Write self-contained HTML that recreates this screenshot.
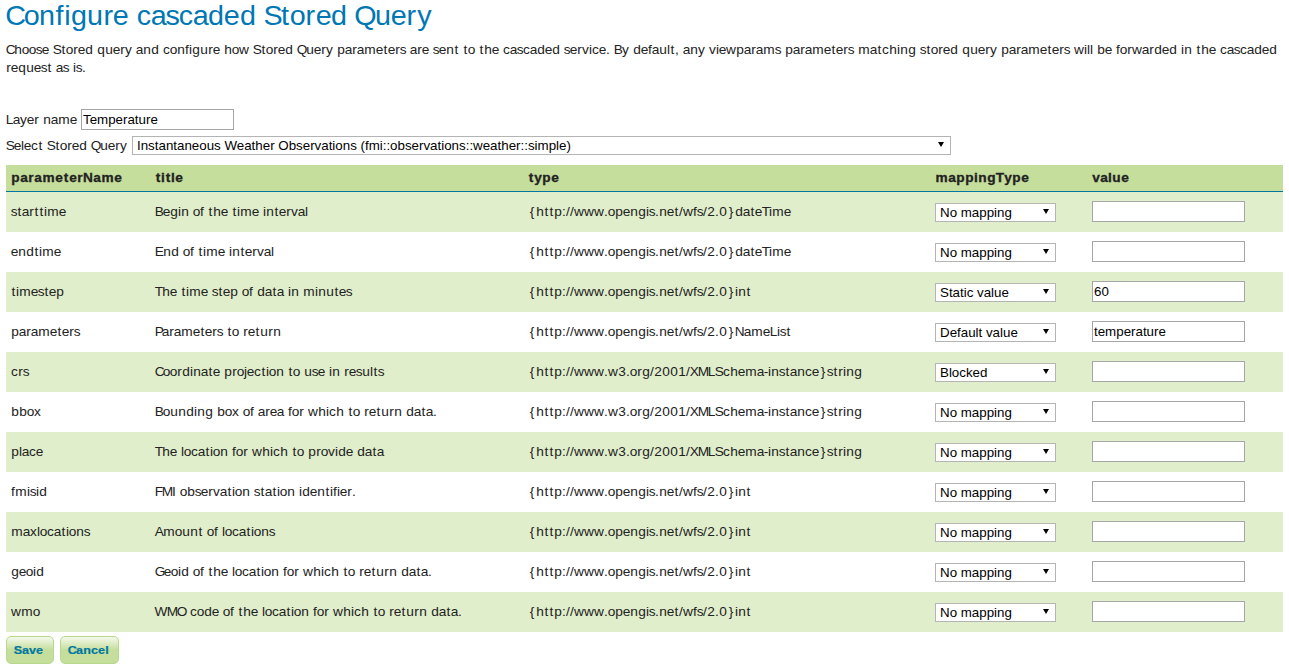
<!DOCTYPE html>
<html><head><meta charset="utf-8">
<style>
html,body{margin:0;padding:0;background:#fff;width:1289px;height:672px;overflow:hidden;position:relative}
body{font-family:"Liberation Sans",sans-serif;font-size:12.72px;color:#222}
.t{position:absolute;white-space:nowrap;line-height:18px}
.t i{display:inline-block;font-style:normal;text-align:center;transform:scaleX(1.075)}
.w3{width:3px}.w4{width:4px}.w5{width:5px}.w6{width:6px}.w7{width:7px}.w8{width:8px}.w8_01562{width:8.01562px}.w8_875{width:8.875px}.w9{width:9px}.w9_875{width:9.875px}.w10{width:10px}.w10_3594{width:10.3594px}.w12{width:12px}.w13{width:13px}.w13_125{width:13.125px}.w13_8594{width:13.8594px}.w14_9219{width:14.9219px}.w15_4219{width:15.4219px}.w15_4375{width:15.4375px}.w15_5{width:15.5px}.w15_9688{width:15.9688px}.w16{width:16px}.w17_5938{width:17.5938px}.w19_8438{width:19.8438px}
.h1{left:6px;top:0;font-size:26.71px;line-height:32px;color:#0077b5}
.desc{left:6px}
.l1{top:41px}.l2{top:59px}
.lbl{left:6px}
.th{top:169px;font-weight:bold;-webkit-text-stroke:0.3px #222}
.thead{position:absolute;left:6px;top:165px;width:1277px;height:26px;background:#c5de9b}
.tline{position:absolute;left:6px;top:191px;width:1277px;height:1px;background:#0076a1}
.row{position:absolute;left:6px;width:1277px;height:40px;background:#e0eecb}
.inp{position:absolute;width:151px;height:19px;border:1px solid #a6a6a6;background:#fff;font-size:13.33px;color:#000;line-height:19px;box-sizing:content-box}
.inp span{position:absolute;left:1px;top:0}
.sel{position:absolute;border:1px solid #b4b4b4;background:#fff;font-size:13.33px;color:#000;line-height:17px;box-sizing:border-box;height:19px}
.sel span{position:absolute;left:4px;top:0;white-space:nowrap}
.sel i{position:absolute;right:6px;top:5px;width:0;height:0;border-left:3px solid transparent;border-right:3px solid transparent;border-top:5px solid #000}
.btn{position:absolute;top:636px;height:28px;box-sizing:border-box;border:1px solid #b8d88e;border-radius:5px;background:linear-gradient(#f4f9ec 0%,#c5de9b 50%,#c5de9b 100%)}
.bt{left:7px;top:4px;color:#0076a1;font-weight:bold;font-size:11.66px;-webkit-text-stroke:0.2px #0076a1}
</style></head><body>

<div class="t h1"><i class="w17_5938">C</i><i class="w15_4219">o</i><i class="w15_9688">n</i><i class="w8_875">f</i><i class="w7">i</i><i class="w16">g</i><i class="w15_9688">u</i><i class="w10_3594">r</i><i class="w15_5">e</i><i class="w8_01562">&nbsp;</i><i class="w13_8594">c</i><i class="w15_4375">a</i><i class="w13_125">s</i><i class="w13_8594">c</i><i class="w15_4375">a</i><i class="w16">d</i><i class="w15_5">e</i><i class="w16">d</i><i class="w8_01562">&nbsp;</i><i class="w16">S</i><i class="w9_875">t</i><i class="w15_4219">o</i><i class="w10_3594">r</i><i class="w15_5">e</i><i class="w16">d</i><i class="w8_01562">&nbsp;</i><i class="w19_8438">Q</i><i class="w15_9688">u</i><i class="w15_5">e</i><i class="w10_3594">r</i><i class="w14_9219">y</i></div>
<div class="t desc l1"><i class="w8">C</i><i class="w8">h</i><i class="w7">o</i><i class="w7">o</i><i class="w6">s</i><i class="w7">e</i><i class="w4">&nbsp;</i><i class="w8">S</i><i class="w5">t</i><i class="w7">o</i><i class="w5">r</i><i class="w7">e</i><i class="w8">d</i><i class="w4">&nbsp;</i><i class="w8">q</i><i class="w8">u</i><i class="w7">e</i><i class="w5">r</i><i class="w7">y</i><i class="w4">&nbsp;</i><i class="w7">a</i><i class="w8">n</i><i class="w8">d</i><i class="w4">&nbsp;</i><i class="w7">c</i><i class="w7">o</i><i class="w8">n</i><i class="w4">f</i><i class="w3">i</i><i class="w8">g</i><i class="w8">u</i><i class="w5">r</i><i class="w7">e</i><i class="w4">&nbsp;</i><i class="w8">h</i><i class="w7">o</i><i class="w10">w</i><i class="w4">&nbsp;</i><i class="w8">S</i><i class="w5">t</i><i class="w7">o</i><i class="w5">r</i><i class="w7">e</i><i class="w8">d</i><i class="w4">&nbsp;</i><i class="w9">Q</i><i class="w8">u</i><i class="w7">e</i><i class="w5">r</i><i class="w7">y</i><i class="w4">&nbsp;</i><i class="w8">p</i><i class="w7">a</i><i class="w5">r</i><i class="w7">a</i><i class="w12">m</i><i class="w7">e</i><i class="w5">t</i><i class="w7">e</i><i class="w5">r</i><i class="w6">s</i><i class="w4">&nbsp;</i><i class="w7">a</i><i class="w5">r</i><i class="w7">e</i><i class="w4">&nbsp;</i><i class="w6">s</i><i class="w7">e</i><i class="w8">n</i><i class="w5">t</i><i class="w4">&nbsp;</i><i class="w5">t</i><i class="w7">o</i><i class="w4">&nbsp;</i><i class="w5">t</i><i class="w8">h</i><i class="w7">e</i><i class="w4">&nbsp;</i><i class="w7">c</i><i class="w7">a</i><i class="w6">s</i><i class="w7">c</i><i class="w7">a</i><i class="w8">d</i><i class="w7">e</i><i class="w8">d</i><i class="w4">&nbsp;</i><i class="w6">s</i><i class="w7">e</i><i class="w5">r</i><i class="w7">v</i><i class="w3">i</i><i class="w7">c</i><i class="w7">e</i><i class="w4">.</i><i class="w4">&nbsp;</i><i class="w8">B</i><i class="w7">y</i><i class="w4">&nbsp;</i><i class="w8">d</i><i class="w7">e</i><i class="w4">f</i><i class="w7">a</i><i class="w8">u</i><i class="w3">l</i><i class="w5">t</i><i class="w4">,</i><i class="w4">&nbsp;</i><i class="w7">a</i><i class="w8">n</i><i class="w7">y</i><i class="w4">&nbsp;</i><i class="w7">v</i><i class="w3">i</i><i class="w7">e</i><i class="w10">w</i><i class="w8">p</i><i class="w7">a</i><i class="w5">r</i><i class="w7">a</i><i class="w12">m</i><i class="w6">s</i><i class="w4">&nbsp;</i><i class="w8">p</i><i class="w7">a</i><i class="w5">r</i><i class="w7">a</i><i class="w12">m</i><i class="w7">e</i><i class="w5">t</i><i class="w7">e</i><i class="w5">r</i><i class="w6">s</i><i class="w4">&nbsp;</i><i class="w12">m</i><i class="w7">a</i><i class="w5">t</i><i class="w7">c</i><i class="w8">h</i><i class="w3">i</i><i class="w8">n</i><i class="w8">g</i><i class="w4">&nbsp;</i><i class="w6">s</i><i class="w5">t</i><i class="w7">o</i><i class="w5">r</i><i class="w7">e</i><i class="w8">d</i><i class="w4">&nbsp;</i><i class="w8">q</i><i class="w8">u</i><i class="w7">e</i><i class="w5">r</i><i class="w7">y</i><i class="w4">&nbsp;</i><i class="w8">p</i><i class="w7">a</i><i class="w5">r</i><i class="w7">a</i><i class="w12">m</i><i class="w7">e</i><i class="w5">t</i><i class="w7">e</i><i class="w5">r</i><i class="w6">s</i><i class="w4">&nbsp;</i><i class="w10">w</i><i class="w3">i</i><i class="w3">l</i><i class="w3">l</i><i class="w4">&nbsp;</i><i class="w8">b</i><i class="w7">e</i><i class="w4">&nbsp;</i><i class="w4">f</i><i class="w7">o</i><i class="w5">r</i><i class="w10">w</i><i class="w7">a</i><i class="w5">r</i><i class="w8">d</i><i class="w7">e</i><i class="w8">d</i><i class="w4">&nbsp;</i><i class="w3">i</i><i class="w8">n</i><i class="w4">&nbsp;</i><i class="w5">t</i><i class="w8">h</i><i class="w7">e</i><i class="w4">&nbsp;</i><i class="w7">c</i><i class="w7">a</i><i class="w6">s</i><i class="w7">c</i><i class="w7">a</i><i class="w8">d</i><i class="w7">e</i><i class="w8">d</i></div><div class="t desc l2"><i class="w5">r</i><i class="w7">e</i><i class="w8">q</i><i class="w8">u</i><i class="w7">e</i><i class="w6">s</i><i class="w5">t</i><i class="w4">&nbsp;</i><i class="w7">a</i><i class="w6">s</i><i class="w4">&nbsp;</i><i class="w3">i</i><i class="w6">s</i><i class="w4">.</i></div>
<div class="t lbl" style="top:111px"><i class="w7">L</i><i class="w7">a</i><i class="w7">y</i><i class="w7">e</i><i class="w5">r</i><i class="w4">&nbsp;</i><i class="w8">n</i><i class="w7">a</i><i class="w12">m</i><i class="w7">e</i></div>
<div class="inp" style="left:81px;top:109px"><span>Temperature</span></div>
<div class="t lbl" style="top:137px"><i class="w8">S</i><i class="w7">e</i><i class="w3">l</i><i class="w7">e</i><i class="w7">c</i><i class="w5">t</i><i class="w4">&nbsp;</i><i class="w8">S</i><i class="w5">t</i><i class="w7">o</i><i class="w5">r</i><i class="w7">e</i><i class="w8">d</i><i class="w4">&nbsp;</i><i class="w9">Q</i><i class="w8">u</i><i class="w7">e</i><i class="w5">r</i><i class="w7">y</i></div>
<div class="sel big" style="left:132px;top:136px;width:819px"><span>Instantaneous Weather Observations (fmi::observations::weather::simple)</span><i></i></div>
<div class="thead"></div><div class="tline"></div>
<div class="t th" style="left:11px"><i class="w9">p</i><i class="w8">a</i><i class="w6">r</i><i class="w8">a</i><i class="w13">m</i><i class="w8">e</i><i class="w6">t</i><i class="w8">e</i><i class="w6">r</i><i class="w10">N</i><i class="w8">a</i><i class="w13">m</i><i class="w8">e</i></div>
<div class="t th" style="left:155px"><i class="w6">t</i><i class="w4">i</i><i class="w6">t</i><i class="w4">l</i><i class="w8">e</i></div>
<div class="t th" style="left:528px"><i class="w6">t</i><i class="w8">y</i><i class="w9">p</i><i class="w8">e</i></div>
<div class="t th" style="left:935px"><i class="w13">m</i><i class="w8">a</i><i class="w9">p</i><i class="w9">p</i><i class="w4">i</i><i class="w9">n</i><i class="w9">g</i><i class="w8">T</i><i class="w8">y</i><i class="w9">p</i><i class="w8">e</i></div>
<div class="t th" style="left:1092px"><i class="w8">v</i><i class="w8">a</i><i class="w4">l</i><i class="w9">u</i><i class="w8">e</i></div>
<div class="row" style="top:192px"></div>
<div class="t td" style="left:11px;top:203px"><i class="w6">s</i><i class="w5">t</i><i class="w7">a</i><i class="w5">r</i><i class="w5">t</i><i class="w5">t</i><i class="w3">i</i><i class="w12">m</i><i class="w7">e</i></div>
<div class="t td" style="left:155px;top:203px"><i class="w8">B</i><i class="w7">e</i><i class="w8">g</i><i class="w3">i</i><i class="w8">n</i><i class="w4">&nbsp;</i><i class="w7">o</i><i class="w4">f</i><i class="w4">&nbsp;</i><i class="w5">t</i><i class="w8">h</i><i class="w7">e</i><i class="w4">&nbsp;</i><i class="w5">t</i><i class="w3">i</i><i class="w12">m</i><i class="w7">e</i><i class="w4">&nbsp;</i><i class="w3">i</i><i class="w8">n</i><i class="w5">t</i><i class="w7">e</i><i class="w5">r</i><i class="w7">v</i><i class="w7">a</i><i class="w3">l</i></div>
<div class="t td" style="left:528px;top:203px"><i class="w8">{</i><i class="w8">h</i><i class="w5">t</i><i class="w5">t</i><i class="w8">p</i><i class="w4">:</i><i class="w4">/</i><i class="w4">/</i><i class="w10">w</i><i class="w10">w</i><i class="w10">w</i><i class="w4">.</i><i class="w7">o</i><i class="w8">p</i><i class="w7">e</i><i class="w8">n</i><i class="w8">g</i><i class="w3">i</i><i class="w6">s</i><i class="w4">.</i><i class="w8">n</i><i class="w7">e</i><i class="w5">t</i><i class="w4">/</i><i class="w10">w</i><i class="w4">f</i><i class="w6">s</i><i class="w4">/</i><i class="w8">2</i><i class="w4">.</i><i class="w8">0</i><i class="w8">}</i><i class="w8">d</i><i class="w7">a</i><i class="w5">t</i><i class="w7">e</i><i class="w7">T</i><i class="w3">i</i><i class="w12">m</i><i class="w7">e</i></div>
<div class="sel" style="left:935px;top:203px;width:121px"><span>No mapping</span><i></i></div>
<div class="inp" style="left:1092px;top:201px"><span></span></div>
<div class="t td" style="left:11px;top:243px"><i class="w7">e</i><i class="w8">n</i><i class="w8">d</i><i class="w5">t</i><i class="w3">i</i><i class="w12">m</i><i class="w7">e</i></div>
<div class="t td" style="left:155px;top:243px"><i class="w8">E</i><i class="w8">n</i><i class="w8">d</i><i class="w4">&nbsp;</i><i class="w7">o</i><i class="w4">f</i><i class="w4">&nbsp;</i><i class="w5">t</i><i class="w3">i</i><i class="w12">m</i><i class="w7">e</i><i class="w4">&nbsp;</i><i class="w3">i</i><i class="w8">n</i><i class="w5">t</i><i class="w7">e</i><i class="w5">r</i><i class="w7">v</i><i class="w7">a</i><i class="w3">l</i></div>
<div class="t td" style="left:528px;top:243px"><i class="w8">{</i><i class="w8">h</i><i class="w5">t</i><i class="w5">t</i><i class="w8">p</i><i class="w4">:</i><i class="w4">/</i><i class="w4">/</i><i class="w10">w</i><i class="w10">w</i><i class="w10">w</i><i class="w4">.</i><i class="w7">o</i><i class="w8">p</i><i class="w7">e</i><i class="w8">n</i><i class="w8">g</i><i class="w3">i</i><i class="w6">s</i><i class="w4">.</i><i class="w8">n</i><i class="w7">e</i><i class="w5">t</i><i class="w4">/</i><i class="w10">w</i><i class="w4">f</i><i class="w6">s</i><i class="w4">/</i><i class="w8">2</i><i class="w4">.</i><i class="w8">0</i><i class="w8">}</i><i class="w8">d</i><i class="w7">a</i><i class="w5">t</i><i class="w7">e</i><i class="w7">T</i><i class="w3">i</i><i class="w12">m</i><i class="w7">e</i></div>
<div class="sel" style="left:935px;top:243px;width:121px"><span>No mapping</span><i></i></div>
<div class="inp" style="left:1092px;top:241px"><span></span></div>
<div class="row" style="top:272px"></div>
<div class="t td" style="left:11px;top:283px"><i class="w5">t</i><i class="w3">i</i><i class="w12">m</i><i class="w7">e</i><i class="w6">s</i><i class="w5">t</i><i class="w7">e</i><i class="w8">p</i></div>
<div class="t td" style="left:155px;top:283px"><i class="w7">T</i><i class="w8">h</i><i class="w7">e</i><i class="w4">&nbsp;</i><i class="w5">t</i><i class="w3">i</i><i class="w12">m</i><i class="w7">e</i><i class="w4">&nbsp;</i><i class="w6">s</i><i class="w5">t</i><i class="w7">e</i><i class="w8">p</i><i class="w4">&nbsp;</i><i class="w7">o</i><i class="w4">f</i><i class="w4">&nbsp;</i><i class="w8">d</i><i class="w7">a</i><i class="w5">t</i><i class="w7">a</i><i class="w4">&nbsp;</i><i class="w3">i</i><i class="w8">n</i><i class="w4">&nbsp;</i><i class="w12">m</i><i class="w3">i</i><i class="w8">n</i><i class="w8">u</i><i class="w5">t</i><i class="w7">e</i><i class="w6">s</i></div>
<div class="t td" style="left:528px;top:283px"><i class="w8">{</i><i class="w8">h</i><i class="w5">t</i><i class="w5">t</i><i class="w8">p</i><i class="w4">:</i><i class="w4">/</i><i class="w4">/</i><i class="w10">w</i><i class="w10">w</i><i class="w10">w</i><i class="w4">.</i><i class="w7">o</i><i class="w8">p</i><i class="w7">e</i><i class="w8">n</i><i class="w8">g</i><i class="w3">i</i><i class="w6">s</i><i class="w4">.</i><i class="w8">n</i><i class="w7">e</i><i class="w5">t</i><i class="w4">/</i><i class="w10">w</i><i class="w4">f</i><i class="w6">s</i><i class="w4">/</i><i class="w8">2</i><i class="w4">.</i><i class="w8">0</i><i class="w8">}</i><i class="w3">i</i><i class="w8">n</i><i class="w5">t</i></div>
<div class="sel" style="left:935px;top:283px;width:121px"><span>Static value</span><i></i></div>
<div class="inp" style="left:1092px;top:281px"><span>60</span></div>
<div class="t td" style="left:11px;top:323px"><i class="w8">p</i><i class="w7">a</i><i class="w5">r</i><i class="w7">a</i><i class="w12">m</i><i class="w7">e</i><i class="w5">t</i><i class="w7">e</i><i class="w5">r</i><i class="w6">s</i></div>
<div class="t td" style="left:155px;top:323px"><i class="w7">P</i><i class="w7">a</i><i class="w5">r</i><i class="w7">a</i><i class="w12">m</i><i class="w7">e</i><i class="w5">t</i><i class="w7">e</i><i class="w5">r</i><i class="w6">s</i><i class="w4">&nbsp;</i><i class="w5">t</i><i class="w7">o</i><i class="w4">&nbsp;</i><i class="w5">r</i><i class="w7">e</i><i class="w5">t</i><i class="w8">u</i><i class="w5">r</i><i class="w8">n</i></div>
<div class="t td" style="left:528px;top:323px"><i class="w8">{</i><i class="w8">h</i><i class="w5">t</i><i class="w5">t</i><i class="w8">p</i><i class="w4">:</i><i class="w4">/</i><i class="w4">/</i><i class="w10">w</i><i class="w10">w</i><i class="w10">w</i><i class="w4">.</i><i class="w7">o</i><i class="w8">p</i><i class="w7">e</i><i class="w8">n</i><i class="w8">g</i><i class="w3">i</i><i class="w6">s</i><i class="w4">.</i><i class="w8">n</i><i class="w7">e</i><i class="w5">t</i><i class="w4">/</i><i class="w10">w</i><i class="w4">f</i><i class="w6">s</i><i class="w4">/</i><i class="w8">2</i><i class="w4">.</i><i class="w8">0</i><i class="w8">}</i><i class="w9">N</i><i class="w7">a</i><i class="w12">m</i><i class="w7">e</i><i class="w7">L</i><i class="w3">i</i><i class="w6">s</i><i class="w5">t</i></div>
<div class="sel" style="left:935px;top:323px;width:121px"><span>Default value</span><i></i></div>
<div class="inp" style="left:1092px;top:321px"><span>temperature</span></div>
<div class="row" style="top:352px"></div>
<div class="t td" style="left:11px;top:363px"><i class="w7">c</i><i class="w5">r</i><i class="w6">s</i></div>
<div class="t td" style="left:155px;top:363px"><i class="w8">C</i><i class="w7">o</i><i class="w7">o</i><i class="w5">r</i><i class="w8">d</i><i class="w3">i</i><i class="w8">n</i><i class="w7">a</i><i class="w5">t</i><i class="w7">e</i><i class="w4">&nbsp;</i><i class="w8">p</i><i class="w5">r</i><i class="w7">o</i><i class="w3">j</i><i class="w7">e</i><i class="w7">c</i><i class="w5">t</i><i class="w3">i</i><i class="w7">o</i><i class="w8">n</i><i class="w4">&nbsp;</i><i class="w5">t</i><i class="w7">o</i><i class="w4">&nbsp;</i><i class="w8">u</i><i class="w6">s</i><i class="w7">e</i><i class="w4">&nbsp;</i><i class="w3">i</i><i class="w8">n</i><i class="w4">&nbsp;</i><i class="w5">r</i><i class="w7">e</i><i class="w6">s</i><i class="w8">u</i><i class="w3">l</i><i class="w5">t</i><i class="w6">s</i></div>
<div class="t td" style="left:528px;top:363px"><i class="w8">{</i><i class="w8">h</i><i class="w5">t</i><i class="w5">t</i><i class="w8">p</i><i class="w4">:</i><i class="w4">/</i><i class="w4">/</i><i class="w10">w</i><i class="w10">w</i><i class="w10">w</i><i class="w4">.</i><i class="w10">w</i><i class="w8">3</i><i class="w4">.</i><i class="w7">o</i><i class="w5">r</i><i class="w8">g</i><i class="w4">/</i><i class="w8">2</i><i class="w8">0</i><i class="w8">0</i><i class="w8">1</i><i class="w4">/</i><i class="w8">X</i><i class="w10">M</i><i class="w7">L</i><i class="w8">S</i><i class="w7">c</i><i class="w8">h</i><i class="w7">e</i><i class="w12">m</i><i class="w7">a</i><i class="w4">-</i><i class="w3">i</i><i class="w8">n</i><i class="w6">s</i><i class="w5">t</i><i class="w7">a</i><i class="w8">n</i><i class="w7">c</i><i class="w7">e</i><i class="w8">}</i><i class="w6">s</i><i class="w5">t</i><i class="w5">r</i><i class="w3">i</i><i class="w8">n</i><i class="w8">g</i></div>
<div class="sel" style="left:935px;top:363px;width:121px"><span>Blocked</span><i></i></div>
<div class="inp" style="left:1092px;top:361px"><span></span></div>
<div class="t td" style="left:11px;top:403px"><i class="w8">b</i><i class="w8">b</i><i class="w7">o</i><i class="w7">x</i></div>
<div class="t td" style="left:155px;top:403px"><i class="w8">B</i><i class="w7">o</i><i class="w8">u</i><i class="w8">n</i><i class="w8">d</i><i class="w3">i</i><i class="w8">n</i><i class="w8">g</i><i class="w4">&nbsp;</i><i class="w8">b</i><i class="w7">o</i><i class="w7">x</i><i class="w4">&nbsp;</i><i class="w7">o</i><i class="w4">f</i><i class="w4">&nbsp;</i><i class="w7">a</i><i class="w5">r</i><i class="w7">e</i><i class="w7">a</i><i class="w4">&nbsp;</i><i class="w4">f</i><i class="w7">o</i><i class="w5">r</i><i class="w4">&nbsp;</i><i class="w10">w</i><i class="w8">h</i><i class="w3">i</i><i class="w7">c</i><i class="w8">h</i><i class="w4">&nbsp;</i><i class="w5">t</i><i class="w7">o</i><i class="w4">&nbsp;</i><i class="w5">r</i><i class="w7">e</i><i class="w5">t</i><i class="w8">u</i><i class="w5">r</i><i class="w8">n</i><i class="w4">&nbsp;</i><i class="w8">d</i><i class="w7">a</i><i class="w5">t</i><i class="w7">a</i><i class="w4">.</i></div>
<div class="t td" style="left:528px;top:403px"><i class="w8">{</i><i class="w8">h</i><i class="w5">t</i><i class="w5">t</i><i class="w8">p</i><i class="w4">:</i><i class="w4">/</i><i class="w4">/</i><i class="w10">w</i><i class="w10">w</i><i class="w10">w</i><i class="w4">.</i><i class="w10">w</i><i class="w8">3</i><i class="w4">.</i><i class="w7">o</i><i class="w5">r</i><i class="w8">g</i><i class="w4">/</i><i class="w8">2</i><i class="w8">0</i><i class="w8">0</i><i class="w8">1</i><i class="w4">/</i><i class="w8">X</i><i class="w10">M</i><i class="w7">L</i><i class="w8">S</i><i class="w7">c</i><i class="w8">h</i><i class="w7">e</i><i class="w12">m</i><i class="w7">a</i><i class="w4">-</i><i class="w3">i</i><i class="w8">n</i><i class="w6">s</i><i class="w5">t</i><i class="w7">a</i><i class="w8">n</i><i class="w7">c</i><i class="w7">e</i><i class="w8">}</i><i class="w6">s</i><i class="w5">t</i><i class="w5">r</i><i class="w3">i</i><i class="w8">n</i><i class="w8">g</i></div>
<div class="sel" style="left:935px;top:403px;width:121px"><span>No mapping</span><i></i></div>
<div class="inp" style="left:1092px;top:401px"><span></span></div>
<div class="row" style="top:432px"></div>
<div class="t td" style="left:11px;top:443px"><i class="w8">p</i><i class="w3">l</i><i class="w7">a</i><i class="w7">c</i><i class="w7">e</i></div>
<div class="t td" style="left:155px;top:443px"><i class="w7">T</i><i class="w8">h</i><i class="w7">e</i><i class="w4">&nbsp;</i><i class="w3">l</i><i class="w7">o</i><i class="w7">c</i><i class="w7">a</i><i class="w5">t</i><i class="w3">i</i><i class="w7">o</i><i class="w8">n</i><i class="w4">&nbsp;</i><i class="w4">f</i><i class="w7">o</i><i class="w5">r</i><i class="w4">&nbsp;</i><i class="w10">w</i><i class="w8">h</i><i class="w3">i</i><i class="w7">c</i><i class="w8">h</i><i class="w4">&nbsp;</i><i class="w5">t</i><i class="w7">o</i><i class="w4">&nbsp;</i><i class="w8">p</i><i class="w5">r</i><i class="w7">o</i><i class="w7">v</i><i class="w3">i</i><i class="w8">d</i><i class="w7">e</i><i class="w4">&nbsp;</i><i class="w8">d</i><i class="w7">a</i><i class="w5">t</i><i class="w7">a</i></div>
<div class="t td" style="left:528px;top:443px"><i class="w8">{</i><i class="w8">h</i><i class="w5">t</i><i class="w5">t</i><i class="w8">p</i><i class="w4">:</i><i class="w4">/</i><i class="w4">/</i><i class="w10">w</i><i class="w10">w</i><i class="w10">w</i><i class="w4">.</i><i class="w10">w</i><i class="w8">3</i><i class="w4">.</i><i class="w7">o</i><i class="w5">r</i><i class="w8">g</i><i class="w4">/</i><i class="w8">2</i><i class="w8">0</i><i class="w8">0</i><i class="w8">1</i><i class="w4">/</i><i class="w8">X</i><i class="w10">M</i><i class="w7">L</i><i class="w8">S</i><i class="w7">c</i><i class="w8">h</i><i class="w7">e</i><i class="w12">m</i><i class="w7">a</i><i class="w4">-</i><i class="w3">i</i><i class="w8">n</i><i class="w6">s</i><i class="w5">t</i><i class="w7">a</i><i class="w8">n</i><i class="w7">c</i><i class="w7">e</i><i class="w8">}</i><i class="w6">s</i><i class="w5">t</i><i class="w5">r</i><i class="w3">i</i><i class="w8">n</i><i class="w8">g</i></div>
<div class="sel" style="left:935px;top:443px;width:121px"><span>No mapping</span><i></i></div>
<div class="inp" style="left:1092px;top:441px"><span></span></div>
<div class="t td" style="left:11px;top:483px"><i class="w4">f</i><i class="w12">m</i><i class="w3">i</i><i class="w6">s</i><i class="w3">i</i><i class="w8">d</i></div>
<div class="t td" style="left:155px;top:483px"><i class="w7">F</i><i class="w10">M</i><i class="w4">I</i><i class="w4">&nbsp;</i><i class="w7">o</i><i class="w8">b</i><i class="w6">s</i><i class="w7">e</i><i class="w5">r</i><i class="w7">v</i><i class="w7">a</i><i class="w5">t</i><i class="w3">i</i><i class="w7">o</i><i class="w8">n</i><i class="w4">&nbsp;</i><i class="w6">s</i><i class="w5">t</i><i class="w7">a</i><i class="w5">t</i><i class="w3">i</i><i class="w7">o</i><i class="w8">n</i><i class="w4">&nbsp;</i><i class="w3">i</i><i class="w8">d</i><i class="w7">e</i><i class="w8">n</i><i class="w5">t</i><i class="w3">i</i><i class="w4">f</i><i class="w3">i</i><i class="w7">e</i><i class="w5">r</i><i class="w4">.</i></div>
<div class="t td" style="left:528px;top:483px"><i class="w8">{</i><i class="w8">h</i><i class="w5">t</i><i class="w5">t</i><i class="w8">p</i><i class="w4">:</i><i class="w4">/</i><i class="w4">/</i><i class="w10">w</i><i class="w10">w</i><i class="w10">w</i><i class="w4">.</i><i class="w7">o</i><i class="w8">p</i><i class="w7">e</i><i class="w8">n</i><i class="w8">g</i><i class="w3">i</i><i class="w6">s</i><i class="w4">.</i><i class="w8">n</i><i class="w7">e</i><i class="w5">t</i><i class="w4">/</i><i class="w10">w</i><i class="w4">f</i><i class="w6">s</i><i class="w4">/</i><i class="w8">2</i><i class="w4">.</i><i class="w8">0</i><i class="w8">}</i><i class="w3">i</i><i class="w8">n</i><i class="w5">t</i></div>
<div class="sel" style="left:935px;top:483px;width:121px"><span>No mapping</span><i></i></div>
<div class="inp" style="left:1092px;top:481px"><span></span></div>
<div class="row" style="top:512px"></div>
<div class="t td" style="left:11px;top:523px"><i class="w12">m</i><i class="w7">a</i><i class="w7">x</i><i class="w3">l</i><i class="w7">o</i><i class="w7">c</i><i class="w7">a</i><i class="w5">t</i><i class="w3">i</i><i class="w7">o</i><i class="w8">n</i><i class="w6">s</i></div>
<div class="t td" style="left:155px;top:523px"><i class="w8">A</i><i class="w12">m</i><i class="w7">o</i><i class="w8">u</i><i class="w8">n</i><i class="w5">t</i><i class="w4">&nbsp;</i><i class="w7">o</i><i class="w4">f</i><i class="w4">&nbsp;</i><i class="w3">l</i><i class="w7">o</i><i class="w7">c</i><i class="w7">a</i><i class="w5">t</i><i class="w3">i</i><i class="w7">o</i><i class="w8">n</i><i class="w6">s</i></div>
<div class="t td" style="left:528px;top:523px"><i class="w8">{</i><i class="w8">h</i><i class="w5">t</i><i class="w5">t</i><i class="w8">p</i><i class="w4">:</i><i class="w4">/</i><i class="w4">/</i><i class="w10">w</i><i class="w10">w</i><i class="w10">w</i><i class="w4">.</i><i class="w7">o</i><i class="w8">p</i><i class="w7">e</i><i class="w8">n</i><i class="w8">g</i><i class="w3">i</i><i class="w6">s</i><i class="w4">.</i><i class="w8">n</i><i class="w7">e</i><i class="w5">t</i><i class="w4">/</i><i class="w10">w</i><i class="w4">f</i><i class="w6">s</i><i class="w4">/</i><i class="w8">2</i><i class="w4">.</i><i class="w8">0</i><i class="w8">}</i><i class="w3">i</i><i class="w8">n</i><i class="w5">t</i></div>
<div class="sel" style="left:935px;top:523px;width:121px"><span>No mapping</span><i></i></div>
<div class="inp" style="left:1092px;top:521px"><span></span></div>
<div class="t td" style="left:11px;top:563px"><i class="w8">g</i><i class="w7">e</i><i class="w7">o</i><i class="w3">i</i><i class="w8">d</i></div>
<div class="t td" style="left:155px;top:563px"><i class="w9">G</i><i class="w7">e</i><i class="w7">o</i><i class="w3">i</i><i class="w8">d</i><i class="w4">&nbsp;</i><i class="w7">o</i><i class="w4">f</i><i class="w4">&nbsp;</i><i class="w5">t</i><i class="w8">h</i><i class="w7">e</i><i class="w4">&nbsp;</i><i class="w3">l</i><i class="w7">o</i><i class="w7">c</i><i class="w7">a</i><i class="w5">t</i><i class="w3">i</i><i class="w7">o</i><i class="w8">n</i><i class="w4">&nbsp;</i><i class="w4">f</i><i class="w7">o</i><i class="w5">r</i><i class="w4">&nbsp;</i><i class="w10">w</i><i class="w8">h</i><i class="w3">i</i><i class="w7">c</i><i class="w8">h</i><i class="w4">&nbsp;</i><i class="w5">t</i><i class="w7">o</i><i class="w4">&nbsp;</i><i class="w5">r</i><i class="w7">e</i><i class="w5">t</i><i class="w8">u</i><i class="w5">r</i><i class="w8">n</i><i class="w4">&nbsp;</i><i class="w8">d</i><i class="w7">a</i><i class="w5">t</i><i class="w7">a</i><i class="w4">.</i></div>
<div class="t td" style="left:528px;top:563px"><i class="w8">{</i><i class="w8">h</i><i class="w5">t</i><i class="w5">t</i><i class="w8">p</i><i class="w4">:</i><i class="w4">/</i><i class="w4">/</i><i class="w10">w</i><i class="w10">w</i><i class="w10">w</i><i class="w4">.</i><i class="w7">o</i><i class="w8">p</i><i class="w7">e</i><i class="w8">n</i><i class="w8">g</i><i class="w3">i</i><i class="w6">s</i><i class="w4">.</i><i class="w8">n</i><i class="w7">e</i><i class="w5">t</i><i class="w4">/</i><i class="w10">w</i><i class="w4">f</i><i class="w6">s</i><i class="w4">/</i><i class="w8">2</i><i class="w4">.</i><i class="w8">0</i><i class="w8">}</i><i class="w3">i</i><i class="w8">n</i><i class="w5">t</i></div>
<div class="sel" style="left:935px;top:563px;width:121px"><span>No mapping</span><i></i></div>
<div class="inp" style="left:1092px;top:561px"><span></span></div>
<div class="row" style="top:592px"></div>
<div class="t td" style="left:11px;top:603px"><i class="w10">w</i><i class="w12">m</i><i class="w7">o</i></div>
<div class="t td" style="left:155px;top:603px"><i class="w12">W</i><i class="w10">M</i><i class="w9">O</i><i class="w4">&nbsp;</i><i class="w7">c</i><i class="w7">o</i><i class="w8">d</i><i class="w7">e</i><i class="w4">&nbsp;</i><i class="w7">o</i><i class="w4">f</i><i class="w4">&nbsp;</i><i class="w5">t</i><i class="w8">h</i><i class="w7">e</i><i class="w4">&nbsp;</i><i class="w3">l</i><i class="w7">o</i><i class="w7">c</i><i class="w7">a</i><i class="w5">t</i><i class="w3">i</i><i class="w7">o</i><i class="w8">n</i><i class="w4">&nbsp;</i><i class="w4">f</i><i class="w7">o</i><i class="w5">r</i><i class="w4">&nbsp;</i><i class="w10">w</i><i class="w8">h</i><i class="w3">i</i><i class="w7">c</i><i class="w8">h</i><i class="w4">&nbsp;</i><i class="w5">t</i><i class="w7">o</i><i class="w4">&nbsp;</i><i class="w5">r</i><i class="w7">e</i><i class="w5">t</i><i class="w8">u</i><i class="w5">r</i><i class="w8">n</i><i class="w4">&nbsp;</i><i class="w8">d</i><i class="w7">a</i><i class="w5">t</i><i class="w7">a</i><i class="w4">.</i></div>
<div class="t td" style="left:528px;top:603px"><i class="w8">{</i><i class="w8">h</i><i class="w5">t</i><i class="w5">t</i><i class="w8">p</i><i class="w4">:</i><i class="w4">/</i><i class="w4">/</i><i class="w10">w</i><i class="w10">w</i><i class="w10">w</i><i class="w4">.</i><i class="w7">o</i><i class="w8">p</i><i class="w7">e</i><i class="w8">n</i><i class="w8">g</i><i class="w3">i</i><i class="w6">s</i><i class="w4">.</i><i class="w8">n</i><i class="w7">e</i><i class="w5">t</i><i class="w4">/</i><i class="w10">w</i><i class="w4">f</i><i class="w6">s</i><i class="w4">/</i><i class="w8">2</i><i class="w4">.</i><i class="w8">0</i><i class="w8">}</i><i class="w3">i</i><i class="w8">n</i><i class="w5">t</i></div>
<div class="sel" style="left:935px;top:603px;width:121px"><span>No mapping</span><i></i></div>
<div class="inp" style="left:1092px;top:601px"><span></span></div>
<div class="btn" style="left:6px;width:48px"><div class="t bt"><i class="w8">S</i><i class="w7">a</i><i class="w7">v</i><i class="w7">e</i></div></div>
<div class="btn" style="left:60px;width:59px"><div class="t bt"><i class="w8">C</i><i class="w7">a</i><i class="w8">n</i><i class="w7">c</i><i class="w7">e</i><i class="w4">l</i></div></div>
</body></html>
